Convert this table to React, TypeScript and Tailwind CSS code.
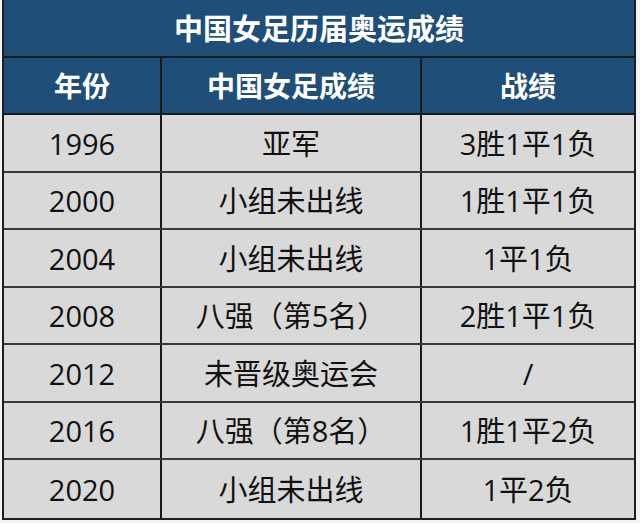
import React from "react";

const rows: { y: string; r: string; s: string; h: string }[] = [
  { y: "1996", r: "亚军", s: "3胜1平1负", h: "h-[58px]" },
  { y: "2000", r: "小组未出线", s: "1胜1平1负", h: "h-[57px]" },
  { y: "2004", r: "小组未出线", s: "1平1负", h: "h-[58px]" },
  { y: "2008", r: "八强（第5名）", s: "2胜1平1负", h: "h-[57px]" },
  { y: "2012", r: "未晋级奥运会", s: "/", h: "h-[58px]" },
  { y: "2016", r: "八强（第8名）", s: "1胜1平2负", h: "h-[57px]" },
  { y: "2020", r: "小组未出线", s: "1平2负", h: "h-[58px]" },
];

const font = {
  fontFamily: '"Open Sans", "Noto Sans CJK SC", sans-serif',
};

export default function App() {
  return (
    <div className="w-[640px] h-[523px] bg-[#f3f3f3] overflow-hidden" style={font}>
      <div className="ml-[2px] w-[634px] border-l-2 border-r-2 border-b-2 border-[#1e1e1e] bg-[#d9d9d9]">
        <div className="h-[58px] bg-[#1f4e79] border-b-2 border-[#1a1a1a] flex items-center justify-center text-white font-bold text-[29px] leading-none">
          中国女足历届奥运成绩
        </div>
        <div className="h-[57px] bg-[#1f4e79] border-b-2 border-[#1a1a1a] flex text-white font-bold text-[28px] leading-none">
          <div className="w-[158px] border-r-2 border-[#1a1a1a] flex items-center justify-center">年份</div>
          <div className="w-[260px] border-r-2 border-[#1a1a1a] flex items-center justify-center">中国女足成绩</div>
          <div className="flex-1 flex items-center justify-center">战绩</div>
        </div>
        {rows.map((row, i) => (
          <div
            key={row.y}
            className={`${row.h} flex text-[29px] leading-none text-[#111] ${i < rows.length - 1 ? "border-b-2 border-[#3a3a3a]" : ""}`}
          >
            <div className="w-[158px] border-r-2 border-[#1a1a1a] flex items-center justify-center">{row.y}</div>
            <div className="w-[260px] border-r-2 border-[#1a1a1a] flex items-center justify-center">{row.r}</div>
            <div className="flex-1 flex items-center justify-center">{row.s}</div>
          </div>
        ))}
      </div>
    </div>
  );
}
